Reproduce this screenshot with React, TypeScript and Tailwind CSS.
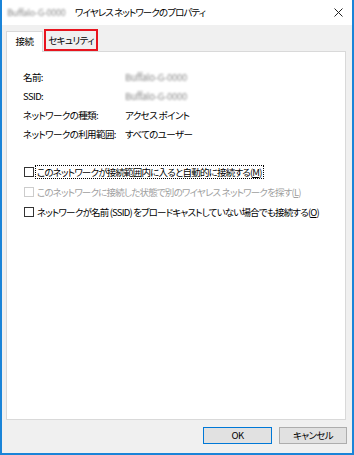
import React from "react";

const font = {
  fontFamily: '"Noto Sans CJK JP", "Noto Sans", sans-serif',
  fontFeatureSettings: '"palt"',
};

function Check({ label, hot, disabled, focused }: { label: string; hot: string; disabled?: boolean; focused?: boolean }) {
  return (
    <div className={`flex items-center h-[20px] whitespace-nowrap ${disabled ? "text-[#a0a0a0]" : "text-black"}`}>
      <span className={`w-[10px] h-[10px] border bg-white shrink-0 ${disabled ? "border-[#cccccc]" : "border-[#333333]"}`} />
      <span className={`ml-[1px] pl-[1px] pr-[1px] leading-[12px] border border-dotted tracking-[-0.8px] ${focused ? "border-black" : "border-transparent"}`}>
        {label}(<span className="underline">{hot}</span>)
      </span>
    </div>
  );
}

export default function App() {
  return (
    <div
      className="w-[354px] h-[455px] bg-[#f0f0f0] border-x-2 border-b-2 border-[#1a84d8] flex flex-col text-[9.5px] tracking-[-0.6px] text-black overflow-hidden whitespace-nowrap"
      style={font}
    >
      {/* title bar */}
      <div className="h-[25px] bg-white flex items-center pl-[5px] pr-[9px] shrink-0">
        <span className="w-[68px] text-[#8a8a8a] blur-[1.1px] text-[9px] tracking-[-0.3px]">Buffalo-G-0000</span>
        <span className="text-[9.5px] tracking-[-0.9px]">ワイヤレス ネットワークのプロパティ</span>
        <svg className="ml-auto" width="9" height="9" viewBox="0 0 9 9">
          <path d="M0.5 0.5 L8.5 8.5 M8.5 0.5 L0.5 8.5" stroke="#222" strokeWidth="1" />
        </svg>
      </div>

      {/* tabs */}
      <div className="flex items-end ml-[4px] mt-[6px] h-[20px] shrink-0 relative z-10">
        <div className="h-[21px] w-[37px] bg-white border border-b-0 border-[#d9d9d9] flex items-center justify-center pb-[2px] -mb-[1px]">
          接続
        </div>
        <div className="h-[22px] w-[54px] ml-[1px] border-[2.5px] border-[#e8141e] bg-[#f0f0f0] flex items-center justify-center pt-[1px]">
          セキュリティ
        </div>
      </div>

      {/* panel */}
      <div className="ml-[4px] w-[340px] h-[369px] bg-white border border-[#d9d9d9] shrink-0 pl-[16px]">
        <div className="mt-[16px] flex flex-col">
          {[
            ["名前:", null],
            ["SSID:", null],
            ["ネットワークの種類:", "アクセス ポイント"],
            ["ネットワークの利用範囲:", "すべてのユーザー"],
          ].map(([k, v], i) => (
            <div key={i} className="flex items-center h-[19px]">
              <span className="w-[102px]">{k}</span>
              {v ? (
                <span>{v}</span>
              ) : (
                <span className="w-[68px] text-[#8a8a8a] blur-[1.1px] tracking-[-0.3px]">Buffalo-G-0000</span>
              )}
            </div>
          ))}
        </div>
        <div className="mt-[18px] flex flex-col ml-[1px]">
          <Check label="このネットワークが接続範囲内に入ると自動的に接続する" hot="M" focused />
          <Check label="このネットワークに接続した状態で別のワイヤレス ネットワークを探す" hot="L" disabled />
          <Check label="ネットワークが名前 (SSID) をブロードキャストしていない場合でも接続する" hot="O" />
        </div>
      </div>

      {/* buttons */}
      <div className="flex justify-end gap-[7px] mt-[7px] pr-[5px]">
        <button className="w-[69px] h-[17px] bg-[#e1e1e1] border border-[#0078d7] flex items-center justify-center">
          OK
        </button>
        <button className="w-[68px] h-[17px] bg-[#e1e1e1] border border-[#adadad] flex items-center justify-center">
          キャンセル
        </button>
      </div>
    </div>
  );
}
